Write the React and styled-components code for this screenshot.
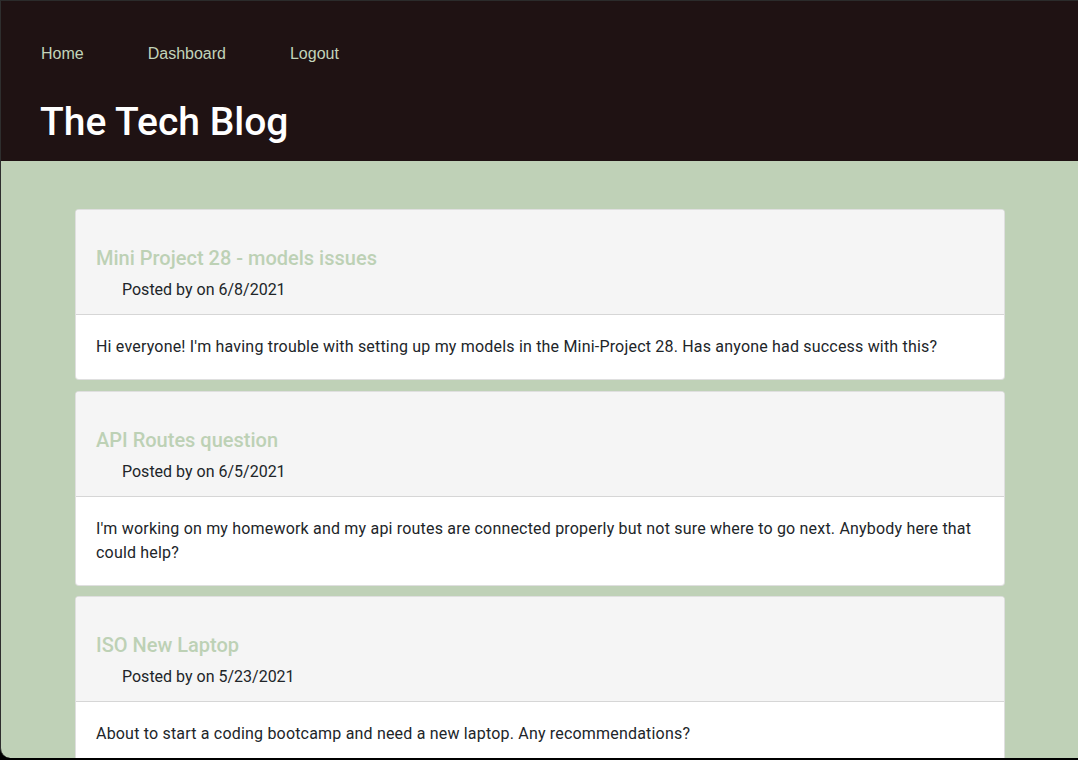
import React from "react";
import styled, { createGlobalStyle } from "styled-components";

const posts = [
  {
    title: "Mini Project 28 - models issues",
    date: "6/8/2021",
    body: "Hi everyone! I'm having trouble with setting up my models in the Mini-Project 28. Has anyone had success with this?",
  },
  {
    title: "API Routes question",
    date: "6/5/2021",
    body: "I'm working on my homework and my api routes are connected properly but not sure where to go next. Anybody here that could help?",
  },
  {
    title: "ISO New Laptop",
    date: "5/23/2021",
    body: "About to start a coding bootcamp and need a new laptop. Any recommendations?",
  },
];

const GlobalStyle = createGlobalStyle`
  html, body {
    margin: 0;
    padding: 0;
    background: #000;
    overflow: hidden;
  }
`;

const App = () => {
  return (
    <>
      <GlobalStyle />
      <Frame>
        <Header>
          <Nav>
            <NavLink href="#">Home</NavLink>
            <NavLink href="#">Dashboard</NavLink>
            <NavLink href="#">Logout</NavLink>
          </Nav>
          <Title>The Tech Blog</Title>
        </Header>
        <Main>
          {posts.map((post, index) => (
            <Card key={index}>
              <CardHeader>
                <PostTitle>{post.title}</PostTitle>
                <Meta>Posted by on {post.date}</Meta>
              </CardHeader>
              <CardBody>{post.body}</CardBody>
            </Card>
          ))}
        </Main>
      </Frame>
    </>
  );
};

export default App;

const Frame = styled.div`
  height: 757px;
  border-top: 1px solid #2b2b2b;
  border-left: 1px solid #2e2e2e;
  border-bottom-left-radius: 10px;
  background: #bfd1b7;
  overflow: hidden;
  display: flex;
  flex-direction: column;
`;

const Header = styled.header`
  flex-shrink: 0;
  background: #1f1213;
  height: 160px;
  box-sizing: border-box;
  padding: 43px 40px 0;
`;

const Nav = styled.nav`
  display: flex;
  gap: 64px;
`;

const NavLink = styled.a`
  font-family: "Liberation Sans", Arial, sans-serif;
  font-size: 16px;
  line-height: 20px;
  color: #c2d4ba;
  text-decoration: none;
`;

const Title = styled.h1`
  margin: 34px 0 0 -1px;
  font-family: Roboto, "Liberation Sans", Arial, sans-serif;
  font-weight: 500;
  font-size: 39px;
  line-height: 48px;
  color: #ffffff;
`;

const Main = styled.main`
  flex: 1;
  padding: 48px 73px 0 74px;
`;

const Card = styled.article`
  background: #fff;
  border: 1px solid rgba(0, 0, 0, 0.125);
  border-radius: 4px;
  margin-bottom: 10.5px;
  overflow: hidden;
  font-family: Roboto, "Noto Sans", sans-serif;
`;

const CardHeader = styled.div`
  background: #f5f5f5;
  padding: 12px 20px;
  border-bottom: 1px solid rgba(0, 0, 0, 0.125);
`;

const PostTitle = styled.h3`
  margin: 24px 0 8px;
  font-size: 20px;
  font-weight: 500;
  line-height: 24px;
  color: #bdd1b5;
`;

const Meta = styled.p`
  margin: 0 0 0 26px;
  font-size: 16px;
  line-height: 24px;
  color: #212529;
`;

const CardBody = styled.div`
  padding: 20px;
  font-size: 16px;
  line-height: 24px;
  letter-spacing: 0.19px;
  color: #212529;
`;
